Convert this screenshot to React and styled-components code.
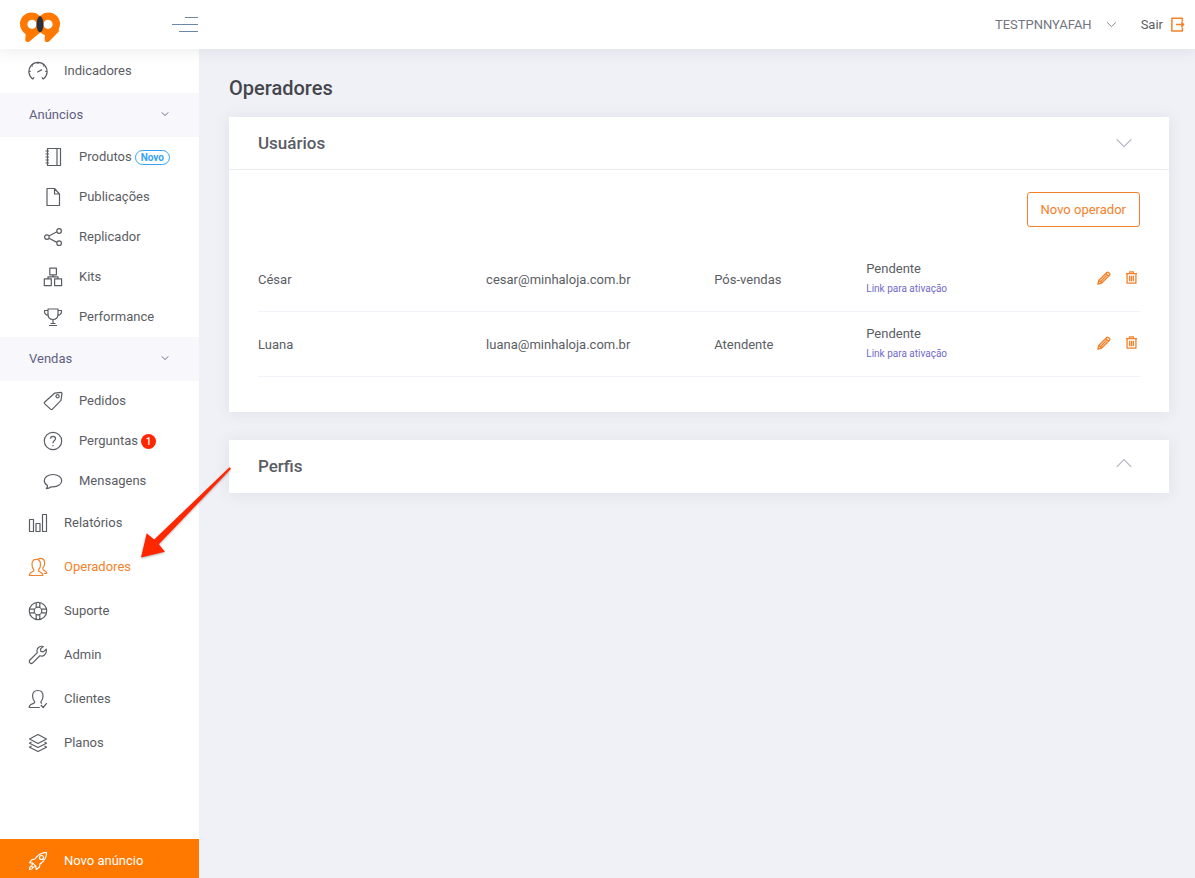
import React from 'react'
import styled, { createGlobalStyle } from 'styled-components'

const GlobalStyle = createGlobalStyle`
  * {
    box-sizing: border-box;
  }
  body {
    margin: 0;
    background: #f0f1f7;
    color: #5b5d64;
    font-family: Roboto, "Open Sans", sans-serif;
    font-size: 13px;
  }
  a {
    color: inherit;
    text-decoration: none;
  }
  button {
    font-family: inherit;
    font-size: inherit;
    cursor: pointer;
  }
`;

// 20x20 line icons
const ICONS = {
  gauge: <path d="M4.800 18A9.100 9.100 0 1 1 15.200 18M4.800 18l1.400-1.600M15.200 18l-1.400-1.600M10 1.300v1.800M.9 10.300h1.800M19.100 10.300h-1.800M3.600 4.100l1.200 1.200M16.400 4.100l-1.200 1.200M9.200 11.200l4.800-2.600" />,
  book: <path d="M4.500 1.500h13v17h-13zM14 1.500v17M2.500 4H6M2.500 7H6M2.500 10H6M2.500 13H6M2.500 16H6" />,
  file: <path d="M4 1.500h7.500l5 5.500v11.500H4zM11.500 1.500V7h5" />,
  share: <path d="M6 9l7.900-4.200M6 11.200l7.900 4.200M6.200 10.100a2.300 2.300 0 1 1-4.600 0a2.300 2.300 0 1 1 4.600 0zM18.400 4a2.300 2.300 0 1 1-4.600 0a2.300 2.300 0 1 1 4.600 0zM18.400 16.200a2.300 2.300 0 1 1-4.600 0a2.300 2.300 0 1 1 4.600 0z" />,
  kits: <path d="M6.800 1.200h6.600v6.600H6.800zM1.300 11.800h7v6.800h-7zM11.600 11.800h7v6.800h-7zM10 7.800v2M5 11.800v-2h10v2" />,
  trophy: <path d="M5 2h10v5c0 3.500-2 5.500-5 5.500S5 10.500 5 7zM5 3.500H1.500v1C1.500 7 3 8 5.500 8.500M15 3.500h3.500v1C18.500 7 17 8 14.500 8.500M10 12.500v4M7.500 16.500h5M6 18.500h8" />,
  tag: <path d="M11.500 2.200l6.500-.8q1 0 1 1l-1 7-8.800 9q-.7.600-1.400 0L1.500 12.600q-.6-.7 0-1.400zM16.200 5.300a1.600 1.600 0 1 1-3.200 0a1.600 1.600 0 1 1 3.200 0z" />,
  question: <path d="M18.700 10a8.700 8.700 0 1 1-17.400 0a8.700 8.700 0 1 1 17.400 0zM7.500 7.700q0-2.400 2.500-2.400t2.500 2.200q0 1.300-1.300 2.200T10 12.200M10 13.900v1.300" />,
  chat: <path d="M4.500 14.600C2.500 13.400 1.300 11.700 1.300 9.700c0-3.500 3.900-6.200 8.700-6.200s8.700 2.700 8.700 6.200-3.900 6.200-8.700 6.200c-.7 0-1.300 0-1.900-.1-1.300 1.100-3 1.800-4.800 1.900.8-.9 1.300-1.900 1.200-3.100z" />,
  bars: <path d="M1.500 6.500h4v12h-4zM8 10.500h4v8H8zM14.500 1.500h4v17h-4z" />,
  users: <path d="M5.700 12.600C4.500 11.400 4 9.500 4 7.200 4 4 5.500 2.300 8.200 2.300s4.300 1.700 4.300 4.900c0 2.300-.6 4.200-1.800 5.400-.5 1 0 1.700 1 2.100 2 .8 3.100 1.300 3.100 3.800H1.300c0-2.400 1-3 3.200-3.800 1.100-.4 1.600-1.100 1.200-2.100zM10.300 2c.6-.5 1.300-.7 2.200-.7 2.700 0 4.100 1.700 4.100 4.700 0 2.300-.6 4-1.700 5.200-.4 1 0 1.600.9 2 1.900.7 2.900 1.200 2.900 3.300h-3" />,
  lifebuoy: <path d="M18.700 10a8.700 8.700 0 1 1-17.400 0a8.700 8.700 0 1 1 17.400 0zM13.800 10a3.800 3.800 0 1 1-7.600 0a3.800 3.800 0 1 1 7.600 0zM8.200 1.500v5M11.800 1.500v5M8.200 13.500v5M11.800 13.500v5M1.500 8.200h5M1.500 11.800h5M13.500 8.200h5M13.500 11.800h5" />,
  wrench: <path d="M18.200 4.200l-3 2.700-2.300-.6-.5-2.200 2.800-2.600c-2.700-.8-5.900.7-6.200 3.700-.1 1 .1 1.700.3 2.400L1.900 15c-.8.800-.8 2 0 2.800s2 .8 2.800 0l7.200-7.100c3.500 1.400 7.300-1.900 6.300-6.500z" />,
  userCheck: <path d="M11.800 18.500H1.200c0-2.500 1.200-3.100 3.900-3.900 1.300-.4 1.900-1.300 1.400-2.200C5.200 11.200 4.600 9.300 4.600 7c0-3.500 1.900-5.500 5.200-5.500S15 3.500 15 7c0 2.300-.6 4.200-1.900 5.400-.5.900-.1 1.600.9 2M12.800 16l2.400 2.500 3.600-4.300" />,
  layers: <path d="M10 1.500L18.500 6 10 10.500 1.500 6zM3.500 9l-2 1.200 8.500 4.300 8.500-4.300-2-1.200M3.500 13l-2 1.200 8.500 4.300 8.500-4.300-2-1.200" />,
  rocket: <path d="M18.600 1.400c-5.500 0-8.300 2-11.600 6.600L4 8.600 1.500 11.700l3.300.5 3 3 .5 3.300 3.100-2.500.6-3C16.600 9.700 18.600 6.900 18.600 1.400zM15.500 6.500a2 2 0 1 1-4 0a2 2 0 1 1 4 0zM4.800 12.200l-1.300 3 1.300 1.300 3-1.300M3.500 15.200c-1.500.3-2 1.700-2 3.300 1.600 0 3-.5 3.300-2" />,
  pencil: <path d="M1.300 18.700l1.500-5.400L14 2.200q1.200-1 2.400 0l1.400 1.400q1 1.200 0 2.400L6.700 17.200zM12.500 3.700l3.800 3.800M2.800 13.300l3.900 3.900M5.500 14.500l8-8" />,
  trash: <path d="M1.500 4h17M7 3.800V1.200h6v2.600M3.200 4v14.800h13.600V4M7.200 7.200v8.600M10 7.200v8.600M12.800 7.200v8.600" />,
  exit: <path d="M16.500 6V1.500h-14v17h14V14M8 10h10.500M15 6.800l3.200 3.200-3.200 3.200" />,
  down: <path d="M2 6l8 8 8-8" />,
  up: <path d="M2 11l8-8 8 8" />,
};

const Svg = styled.svg`
  flex: none;
  width: ${(p) => p.$size}px;
  height: ${(p) => p.$size}px;
  fill: none;
  stroke: currentColor;
  stroke-linejoin: round;
`;

const Icon = ({ name, size = 20, weight = 1.2 }) => (
  <Svg $size={size} viewBox="0 0 20 20" strokeWidth={weight} aria-hidden="true">
    {ICONS[name]}
  </Svg>
)

const MENU = [
  {name: "Indicadores", icon: "gauge"},
  {name: "Anúncios", values: [
    {name: "Produtos", icon: "book", tag: "Novo"},
    {name: "Publicações", icon: "file"},
    {name: "Replicador", icon: "share"},
    {name: "Kits", icon: "kits"},
    {name: "Performance", icon: "trophy"},
  ]},
  {name: "Vendas", values: [
    {name: "Pedidos", icon: "tag"},
    {name: "Perguntas", icon: "question", count: 1},
    {name: "Mensagens", icon: "chat"},
  ]},
  {name: "Relatórios", icon: "bars"},
  {name: "Operadores", icon: "users", active: true},
  {name: "Suporte", icon: "lifebuoy"},
  {name: "Admin", icon: "wrench"},
  {name: "Clientes", icon: "userCheck"},
  {name: "Planos", icon: "layers"},
];

const OPERATORS = [
  {name: "César", email: "cesar@minhaloja.com.br", role: "Pós-vendas", status: "Pendente"},
  {name: "Luana", email: "luana@minhaloja.com.br", role: "Atendente", status: "Pendente"},
];

const Page = styled.div`
  position: relative;
  display: flex;
  flex-direction: column;
  min-height: 100vh;
`;
const TopBar = styled.header`
  z-index: 1;
  display: flex;
  align-items: center;
  justify-content: space-between;
  height: 49px;
  padding-right: 10px;
  background: #fff;
  box-shadow: 0 1px 15px 1px rgba(69, 65, 78, 0.1);
`;
const Brand = styled.div`
  display: flex;
  align-items: center;
  justify-content: space-between;
  width: 198px;
  padding-left: 20px;
`;
const Logo = styled.svg`
  width: 40px;
  height: 36px;
`;
const MenuToggle = styled.button`
  display: flex;
  flex-direction: column;
  align-items: flex-end;
  gap: 6px;
  padding: 0;
  border: 0;
  background: none;
`;
const Line = styled.span`
  width: ${(p) => p.$width}px;
  height: 1px;
  background: #6c87a6;
`;
const UserArea = styled.div`
  display: flex;
  align-items: center;
  gap: 24px;
`;
const UserButton = styled.button`
  display: flex;
  align-items: center;
  gap: 14px;
  padding: 0;
  border: 0;
  background: none;
  color: #727582;
`;
const Exit = styled.a`
  display: flex;
  align-items: center;
  gap: 7px;

  svg {
    color: #f4812a;
  }
`;
const Body = styled.div`
  flex: 1;
  display: flex;
`;
const Sidebar = styled.aside`
  flex: none;
  display: flex;
  flex-direction: column;
  justify-content: space-between;
  width: 199px;
  background: #fff;
`;
const MenuList = styled.ul`
  margin: 0;
  padding: 0;
  list-style: none;
`;
const MenuLink = styled.a`
  display: flex;
  align-items: center;
  height: ${(p) => (p.$sub ? 40 : 44)}px;
  padding-left: ${(p) => (p.$sub ? 43 : 28)}px;
  color: ${(p) => (p.$active ? "#f4812a" : "#5b5d64")};
`;
const MenuText = styled.span`
  margin-left: 16px;
  padding-bottom: 2px;
`;
const GroupButton = styled.button`
  display: flex;
  align-items: center;
  justify-content: space-between;
  width: 100%;
  height: 44px;
  padding: 0 30px 2px 29px;
  border: 0;
  background: #f7f7fc;
  color: #5f6080;
`;
const Tag = styled.span`
  margin-left: 3px;
  padding: 0 5px;
  border: 1px solid #36a3f7;
  border-radius: 8px;
  color: #36a3f7;
  font-size: 10px;
  font-weight: 700;
  line-height: 13px;
`;
const Count = styled.span`
  width: 15px;
  margin-left: 3px;
  border-radius: 50%;
  background: #ff2600;
  color: #fff;
  font-size: 10px;
  font-weight: 500;
  line-height: 15px;
  text-align: center;
`;
const NewAd = styled.a`
  display: flex;
  align-items: center;
  height: 39px;
  padding: 5px 0 0 28px;
  background: #ff7800;
  color: #fff;
`;
const Main = styled.main`
  flex: 1;
  min-width: 0;
  padding: 26px 26px 30px 30px;
`;
const Title = styled.h1`
  margin: 0 0 16px;
  color: #45464d;
  font-size: 20px;
  font-weight: 500;
  line-height: 26px;
`;
const Card = styled.section`
  margin-bottom: 28px;
  background: #fff;
  box-shadow: 0 1px 15px 1px rgba(69, 65, 78, 0.08);
`;
const CardHead = styled.header`
  display: flex;
  align-items: center;
  justify-content: space-between;
  height: 53px;
  padding: 0 36px 0 29px;
  border-bottom: 1px solid ${(p) => (p.$open ? "#ebedf2" : "#fff")};
`;
const CardTitle = styled.h2`
  margin: 0;
  font-size: 17px;
  font-weight: 500;
`;
const Toggle = styled.button`
  display: flex;
  padding: 0;
  border: 0;
  background: none;
  color: #b1b3c2;
`;
const CardBody = styled.div`
  padding: 22px 29px 35px;
`;
const Actions = styled.div`
  display: flex;
  justify-content: flex-end;
  margin-bottom: 20px;
`;
const OutlineButton = styled.button`
  height: 35px;
  padding: 0 13px;
  border: 1px solid #f4812a;
  border-radius: 3px;
  background: #fff;
  color: #f4812a;
`;
const Table = styled.table`
  width: 100%;
  border-spacing: 0;
  table-layout: fixed;
`;
const Col = styled.col`
  width: calc(100% * ${(p) => p.$share} / 58);
`;
const Cell = styled.td`
  height: 65px;
  padding: 0;
  border-bottom: 1px solid #f2f3f8;
`;
const StatusBox = styled.div`
  display: flex;
  align-items: center;
  justify-content: space-between;
`;
const Status = styled.div`
  line-height: 20px;
`;
const ActivationLink = styled.a`
  display: block;
  color: #716aca;
  font-size: 10px;
  line-height: 20px;
`;
const RowActions = styled.div`
  display: flex;
  gap: 14px;
  padding: 0 2px 2px 0;
`;
const IconButton = styled.button`
  display: flex;
  padding: 0;
  border: 0;
  background: none;
  color: #f4812a;
`;
const Arrow = styled.svg`
  position: absolute;
  z-index: 2;
  top: 464px;
  left: 136px;
  width: 98px;
  height: 98px;
  filter: drop-shadow(0 1px 1px rgba(0, 0, 0, 0.3));
  pointer-events: none;
`;

const MenuItem = ({ item, sub }) => (
  <li>
    <MenuLink href="#" $sub={sub} $active={item.active}>
      <Icon name={item.icon} />
      <MenuText>{item.name}</MenuText>
      {item.tag && <Tag>{item.tag}</Tag>}
      {item.count && <Count>{item.count}</Count>}
    </MenuLink>
  </li>
)

const OperatorRow = ({ user }) => (
  <tr>
    <Cell>{user.name}</Cell>
    <Cell>{user.email}</Cell>
    <Cell>{user.role}</Cell>
    <Cell>
      <StatusBox>
        <div>
          <Status>{user.status}</Status>
          <ActivationLink href="#">Link para ativação</ActivationLink>
        </div>
        <RowActions>
          <IconButton aria-label={"Editar " + user.name}>
            <Icon name="pencil" size={14} weight={2} />
          </IconButton>
          <IconButton aria-label={"Excluir " + user.name}>
            <Icon name="trash" size={13} weight={2} />
          </IconButton>
        </RowActions>
      </StatusBox>
    </Cell>
  </tr>
)

export default function App() {
  return (
    <Page>
      <GlobalStyle />
      <TopBar>
        <Brand>
          <Logo viewBox="0 -5 40 36" role="img" aria-label="99">
            <g fill="#ff7800" stroke="#ff7800" strokeWidth="4" strokeLinejoin="round">
              <circle cx="11.5" cy="12" r="9.500" />
              <circle cx="28.5" cy="12" r="9.500" />
              <path d="M5.500 18l2.300 3.500-.6 6.500h1L20 18z" />
              <path d="M23 18l4 3.500-.4 6.500h1L37 18.500z" />
            </g>
            <circle cx="12" cy="12.300" r="4.600" fill="#fff" />
            <circle cx="28" cy="12.300" r="4.600" fill="#fff" />
            <ellipse cx="20" cy="12.300" rx="3.500" ry="8" fill="#2b3040" />
          </Logo>
          <MenuToggle aria-label="Menu">
            <Line $width={13} />
            <Line $width={26} />
            <Line $width={19} />
          </MenuToggle>
        </Brand>
        <UserArea>
          <UserButton>
            TESTPNNYAFAH
            <Icon name="down" size={11} weight={1.6} />
          </UserButton>
          <Exit href="#">
            Sair
            <Icon name="exit" size={15} weight={2} />
          </Exit>
        </UserArea>
      </TopBar>
      <Body>
        <Sidebar>
          <nav>
            <MenuList>
              {MENU.map((item) => {
                if (!item.values) {
                  return (<MenuItem key={item.name} item={item} />)
                }
                return (
                  <li key={item.name}>
                    <GroupButton>
                      {item.name}
                      <Icon name="down" size={8} weight={2.4} />
                    </GroupButton>
                    <MenuList>
                      {item.values.map((child) => (<MenuItem key={child.name} item={child} sub />))}
                    </MenuList>
                  </li>
                )
              })}
            </MenuList>
          </nav>
          <NewAd href="#">
            <Icon name="rocket" />
            <MenuText>Novo anúncio</MenuText>
          </NewAd>
        </Sidebar>
        <Main>
          <Title>Operadores</Title>
          <Card>
            <CardHead $open>
              <CardTitle>Usuários</CardTitle>
              <Toggle aria-label="Recolher usuários">
                <Icon name="down" size={18} weight={1.3} />
              </Toggle>
            </CardHead>
            <CardBody>
              <Actions>
                <OutlineButton>Novo operador</OutlineButton>
              </Actions>
              <Table>
                <colgroup>
                  <Col $share={15} />
                  <Col $share={15} />
                  <Col $share={10} />
                  <Col $share={18} />
                </colgroup>
                <tbody>
                  {OPERATORS.map((user) => (<OperatorRow key={user.email} user={user} />))}
                </tbody>
              </Table>
            </CardBody>
          </Card>
          <Card>
            <CardHead>
              <CardTitle>Perfis</CardTitle>
              <Toggle aria-label="Expandir perfis">
                <Icon name="up" size={18} weight={1.3} />
              </Toggle>
            </CardHead>
          </Card>
        </Main>
      </Body>
      <Arrow viewBox="0 0 98 98" aria-hidden="true">
        <path d="M93.500 3.300L95 4.800 22.800 80.300l6.200 7.400L5 93.500l5.700-24.200 7.500 6.200z" fill="#ff2600" />
      </Arrow>
    </Page>
  )
}
